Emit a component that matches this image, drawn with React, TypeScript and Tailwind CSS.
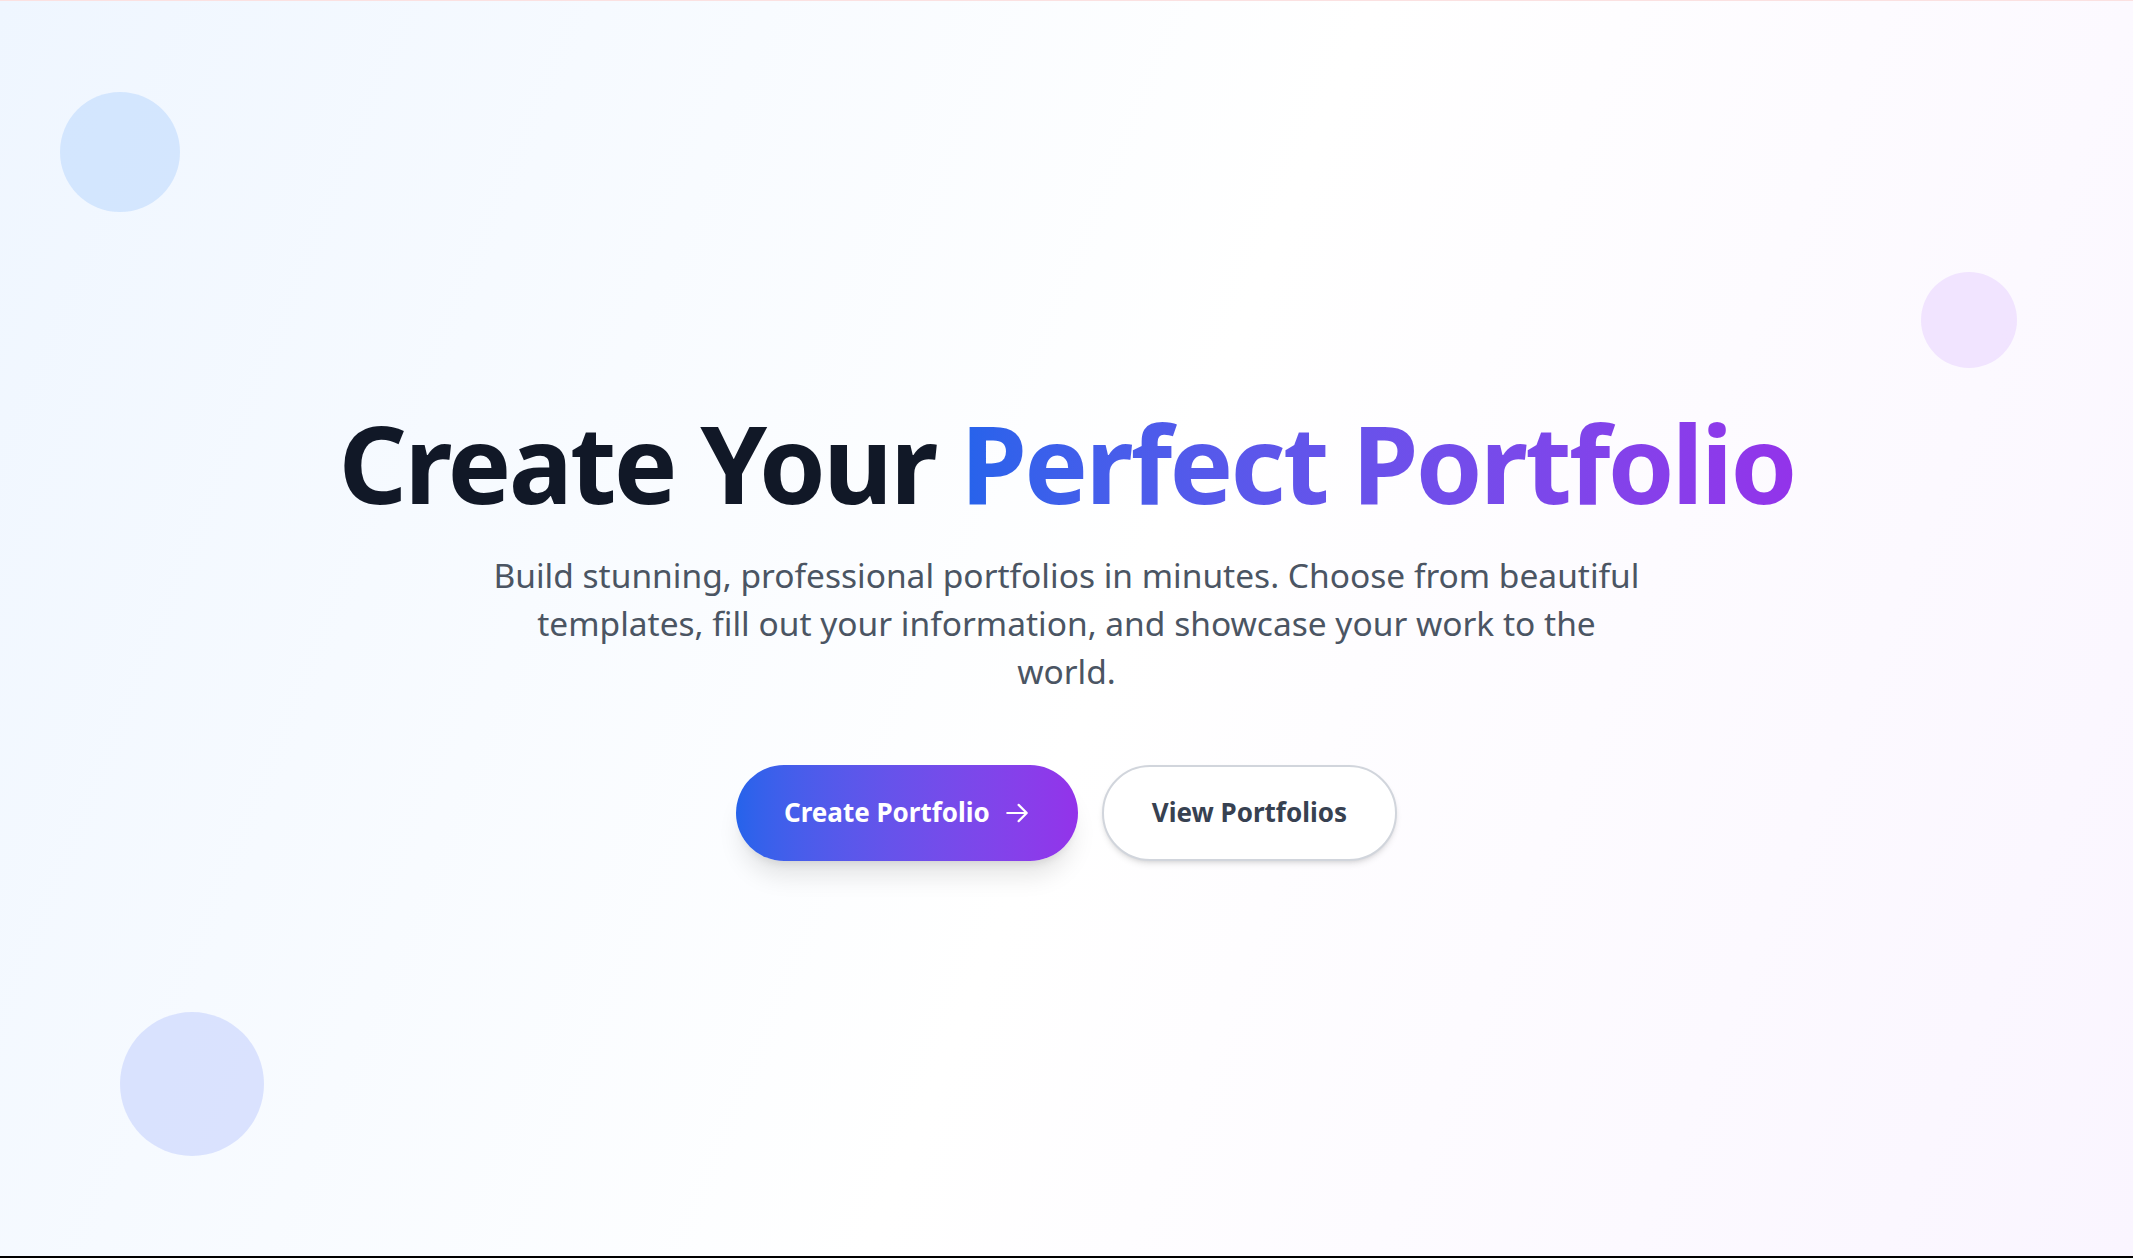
export default function App() {
  return (
    <div
      className="flex h-screen flex-col overflow-hidden"
      style={{ fontFamily: '"Noto Sans", "Open Sans", sans-serif' }}
    >
      <div className="h-px bg-[#fbe1e1]" />
      <section className="relative flex flex-1 items-center justify-center overflow-hidden bg-[linear-gradient(112deg,#eff6ff_0%,#ffffff_52%,#faf5ff_100%)]">
        {/* floating decorations */}
        <div className="absolute left-[60px] top-[91px] h-[120px] w-[120px] rounded-full bg-[#bfdbfe] opacity-60" />
        <div className="absolute right-[116px] top-[271px] h-24 w-24 rounded-full bg-[#e9d5ff] opacity-60" />
        <div className="absolute bottom-[100px] left-[120px] h-36 w-36 rounded-full bg-[#c7d2fe] opacity-60" />

        <div className="relative z-10 flex flex-col items-center px-6 text-center">
          <h1 className="mb-[21px] text-[107px] font-bold leading-tight tracking-tight text-[#111827]">
            Create Your{' '}
            <span className="bg-gradient-to-r from-[#2563eb] to-[#9333ea] bg-clip-text text-transparent">
              Perfect Portfolio
            </span>
          </h1>
          <p className="mb-[70px] max-w-[1155px] text-[33.5px] leading-[48px] text-[#4b5563]">
            Build stunning, professional portfolios in minutes. Choose from beautiful templates, fill out your
            information, and showcase your work to the world.
          </p>
          <div className="flex items-center gap-6">
            <button className="flex h-24 items-center gap-[14px] rounded-full bg-gradient-to-r from-[#2563eb] to-[#9333ea] px-12 text-[26px] font-bold text-white shadow-xl">
              Create Portfolio
              <svg
                width="26"
                height="26"
                viewBox="0 0 24 24"
                fill="none"
                stroke="currentColor"
                strokeWidth={2}
                strokeLinecap="round"
                strokeLinejoin="round"
              >
                <path d="M13.5 4.5 21 12m0 0-7.5 7.5M21 12H3" />
              </svg>
            </button>
            <button className="flex h-24 items-center rounded-full border-2 border-gray-300 bg-white px-12 text-[26px] font-bold text-[#374151] shadow-md">
              View Portfolios
            </button>
          </div>
        </div>
      </section>
      <div className="h-[2px] bg-black" />
    </div>
  );
}
